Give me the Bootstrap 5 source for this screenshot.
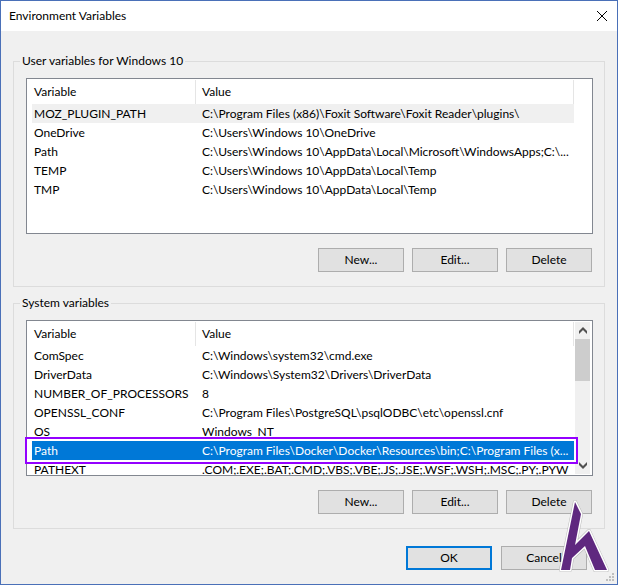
<!DOCTYPE html>
<html lang="en">
<head>
<meta charset="utf-8">
<meta name="viewport" content="width=device-width, initial-scale=1">
<title>Environment Variables</title>
<link href="https://cdn.jsdelivr.net/npm/bootstrap@5.3.0/dist/css/bootstrap.min.css" rel="stylesheet">
<style>
  body { font: 12px/16px Lato, "Open Sans", sans-serif; color: #000; background: #f0f0f0; }
  .dialog { border: 1px solid #4a70b8; background: #f0f0f0; }
  .titlebar { height: 30px; padding-left: 8px; background: #fff; }
  .titlebar h1 { font-size: 12px; line-height: 16px; }
  .close-btn { width: 30px; height: 28px; }
  .groups { padding: 22px 12px 0; gap: 8px; }
  .group { border: 1px solid #dcdcdc; padding: 0 5px 14px 6px; min-width: 0; }
  .group legend { float: none; width: auto; font-size: 12px; line-height: 16px; margin-bottom: 9px; padding: 0 2px; }
  .list-box { height: 156px; margin: 0 6px 14px; border: 1px solid #828790; background: #fff; }
  .list-view { padding: 1px 1px 0 5px; }
  .vars { table-layout: fixed; width: 100%; border-collapse: separate; border-spacing: 0; white-space: nowrap; }
  .vars th { height: 24px; padding: 0 0 0 6px; font-weight: 400; border-right: 1px solid #e5e5e5; }
  .vars th:first-child { width: 164px; padding-left: 2px; }
  .vars td { height: 19px; padding: 1px 0 0 6px; line-height: 18px; }
  .vars td:first-child { padding-left: 2px; }
  .vars .hot td { background: #f0f0f0; }
  .vars .picked td { background: #0078d7; color: #fff; }
  .gutter { width: 17px; padding: 1px 2px 1px 0; }
  .track { background: #f0f0f0; }
  .track button { height: 17px; }
  .thumb { height: 42px; background: #cdcdcd; }
  .ring { top: 116px; left: -2px; right: 14px; height: 27px; border: 2px solid #9400ff; box-shadow: inset 0 0 0 2px #fff; pointer-events: none; }
  .push { width: 86px; height: 24px; padding: 0; font-size: 12px; line-height: 16px; color: #000; background: #e1e1e1; border: 1px solid #adadad; border-radius: 0; }
  .push.default { border: 2px solid #0078d7; }
  .actions { gap: 8px; margin-right: 7px; }
  .footer-row { gap: 9px; padding: 17px 30px 14px 0; }
  .logo { right: 6px; bottom: 8px; pointer-events: none; }
  .grip { right: 2px; bottom: 2px; }
</style>
<script src="https://cdn.jsdelivr.net/npm/bootstrap@5.3.0/dist/js/bootstrap.bundle.min.js" defer></script>
</head>
<body>
<main class="dialog position-relative min-vh-100 d-flex flex-column">
  <header class="titlebar d-flex align-items-center justify-content-between">
    <h1 class="m-0 fw-normal">Environment Variables</h1>
    <button type="button" class="close-btn btn p-0 border-0 rounded-0 d-flex align-items-center justify-content-center" aria-label="Close">
      <svg width="12" height="12" viewBox="0 0 12 12" stroke="#000" stroke-width="1" fill="none"><path d="M1 1 11 11M11 1 1 11"/></svg>
    </button>
  </header>

  <div class="groups d-flex flex-column">
    <fieldset class="group">
      <legend>User variables for Windows 10</legend>
      <div class="list-box d-flex">
        <div class="list-view flex-grow-1 overflow-hidden">
          <table class="vars">
            <thead><tr><th scope="col">Variable</th><th scope="col">Value</th></tr></thead>
            <tbody>
              <tr class="hot"><td>MOZ_PLUGIN_PATH</td><td>C:\Program Files (x86)\Foxit Software\Foxit Reader\plugins\</td></tr>
              <tr><td>OneDrive</td><td>C:\Users\Windows 10\OneDrive</td></tr>
              <tr><td>Path</td><td>C:\Users\Windows 10\AppData\Local\Microsoft\WindowsApps;C:\...</td></tr>
              <tr><td>TEMP</td><td>C:\Users\Windows 10\AppData\Local\Temp</td></tr>
              <tr><td>TMP</td><td>C:\Users\Windows 10\AppData\Local\Temp</td></tr>
            </tbody>
          </table>
        </div>
        <div class="gutter flex-shrink-0"></div>
      </div>
      <div class="actions d-flex justify-content-end">
        <button type="button" class="push btn">New...</button>
        <button type="button" class="push btn">Edit...</button>
        <button type="button" class="push btn">Delete</button>
      </div>
    </fieldset>

    <fieldset class="group">
      <legend>System variables</legend>
      <div class="list-box d-flex position-relative">
        <div class="list-view flex-grow-1 overflow-hidden">
          <table class="vars">
            <thead><tr><th scope="col">Variable</th><th scope="col">Value</th></tr></thead>
            <tbody>
              <tr><td>ComSpec</td><td>C:\Windows\system32\cmd.exe</td></tr>
              <tr><td>DriverData</td><td>C:\Windows\System32\Drivers\DriverData</td></tr>
              <tr><td>NUMBER_OF_PROCESSORS</td><td>8</td></tr>
              <tr><td>OPENSSL_CONF</td><td>C:\Program Files\PostgreSQL\psqlODBC\etc\openssl.cnf</td></tr>
              <tr><td>OS</td><td>Windows_NT</td></tr>
              <tr class="picked"><td>Path</td><td>C:\Program Files\Docker\Docker\Resources\bin;C:\Program Files (x...</td></tr>
              <tr><td>PATHEXT</td><td>.COM;.EXE;.BAT;.CMD;.VBS;.VBE;.JS;.JSE;.WSF;.WSH;.MSC;.PY;.PYW</td></tr>
            </tbody>
          </table>
        </div>
        <div class="gutter flex-shrink-0 d-flex">
          <div class="track flex-grow-1 d-flex flex-column">
            <button type="button" class="btn p-0 border-0 d-flex align-items-center justify-content-center" aria-label="Scroll up">
              <svg width="8" height="7" viewBox="0 0 8 7" fill="#505050"><path d="M4 0 8 4V7L4 3 0 7V4Z"/></svg>
            </button>
            <div class="thumb"></div>
            <button type="button" class="btn p-0 border-0 mt-auto d-flex align-items-center justify-content-center" aria-label="Scroll down">
              <svg width="8" height="7" viewBox="0 0 8 7" fill="#505050"><path d="M4 7 8 3V0L4 4 0 0V3Z"/></svg>
            </button>
          </div>
        </div>
        <div class="ring position-absolute"></div>
      </div>
      <div class="actions d-flex justify-content-end">
        <button type="button" class="push btn">New...</button>
        <button type="button" class="push btn">Edit...</button>
        <button type="button" class="push btn">Delete</button>
      </div>
    </fieldset>
  </div>

  <footer class="footer-row d-flex justify-content-end">
    <button type="button" class="push default btn">OK</button>
    <button type="button" class="push btn">Cancel</button>
  </footer>

  <svg class="logo position-absolute" width="54" height="80" viewBox="0 0 54 80" aria-hidden="true">
    <g stroke-linejoin="round">
      <path d="M18 6 24 18 18 49 32 35 50 74H38L28 50 15 62 13 74H4Z" fill="#999" stroke="#999" stroke-opacity=".6" stroke-width="4"/>
      <path d="M18 6 24 18 18 49 32 35 50 74H38L28 50 15 62 13 74H4Z" fill="#5f287f" stroke="#fff" stroke-width="3" paint-order="stroke"/>
    </g>
  </svg>
  <svg class="grip position-absolute" width="9" height="9" viewBox="0 0 9 9" fill="#bfbfbf" aria-hidden="true">
    <path d="M6 0h2v2H6zM3 3h2v2H3zM6 3h2v2H6zM0 6h2v2H0zM3 6h2v2H3zM6 6h2v2H6z"/>
  </svg>
</main>
</body>
</html>
